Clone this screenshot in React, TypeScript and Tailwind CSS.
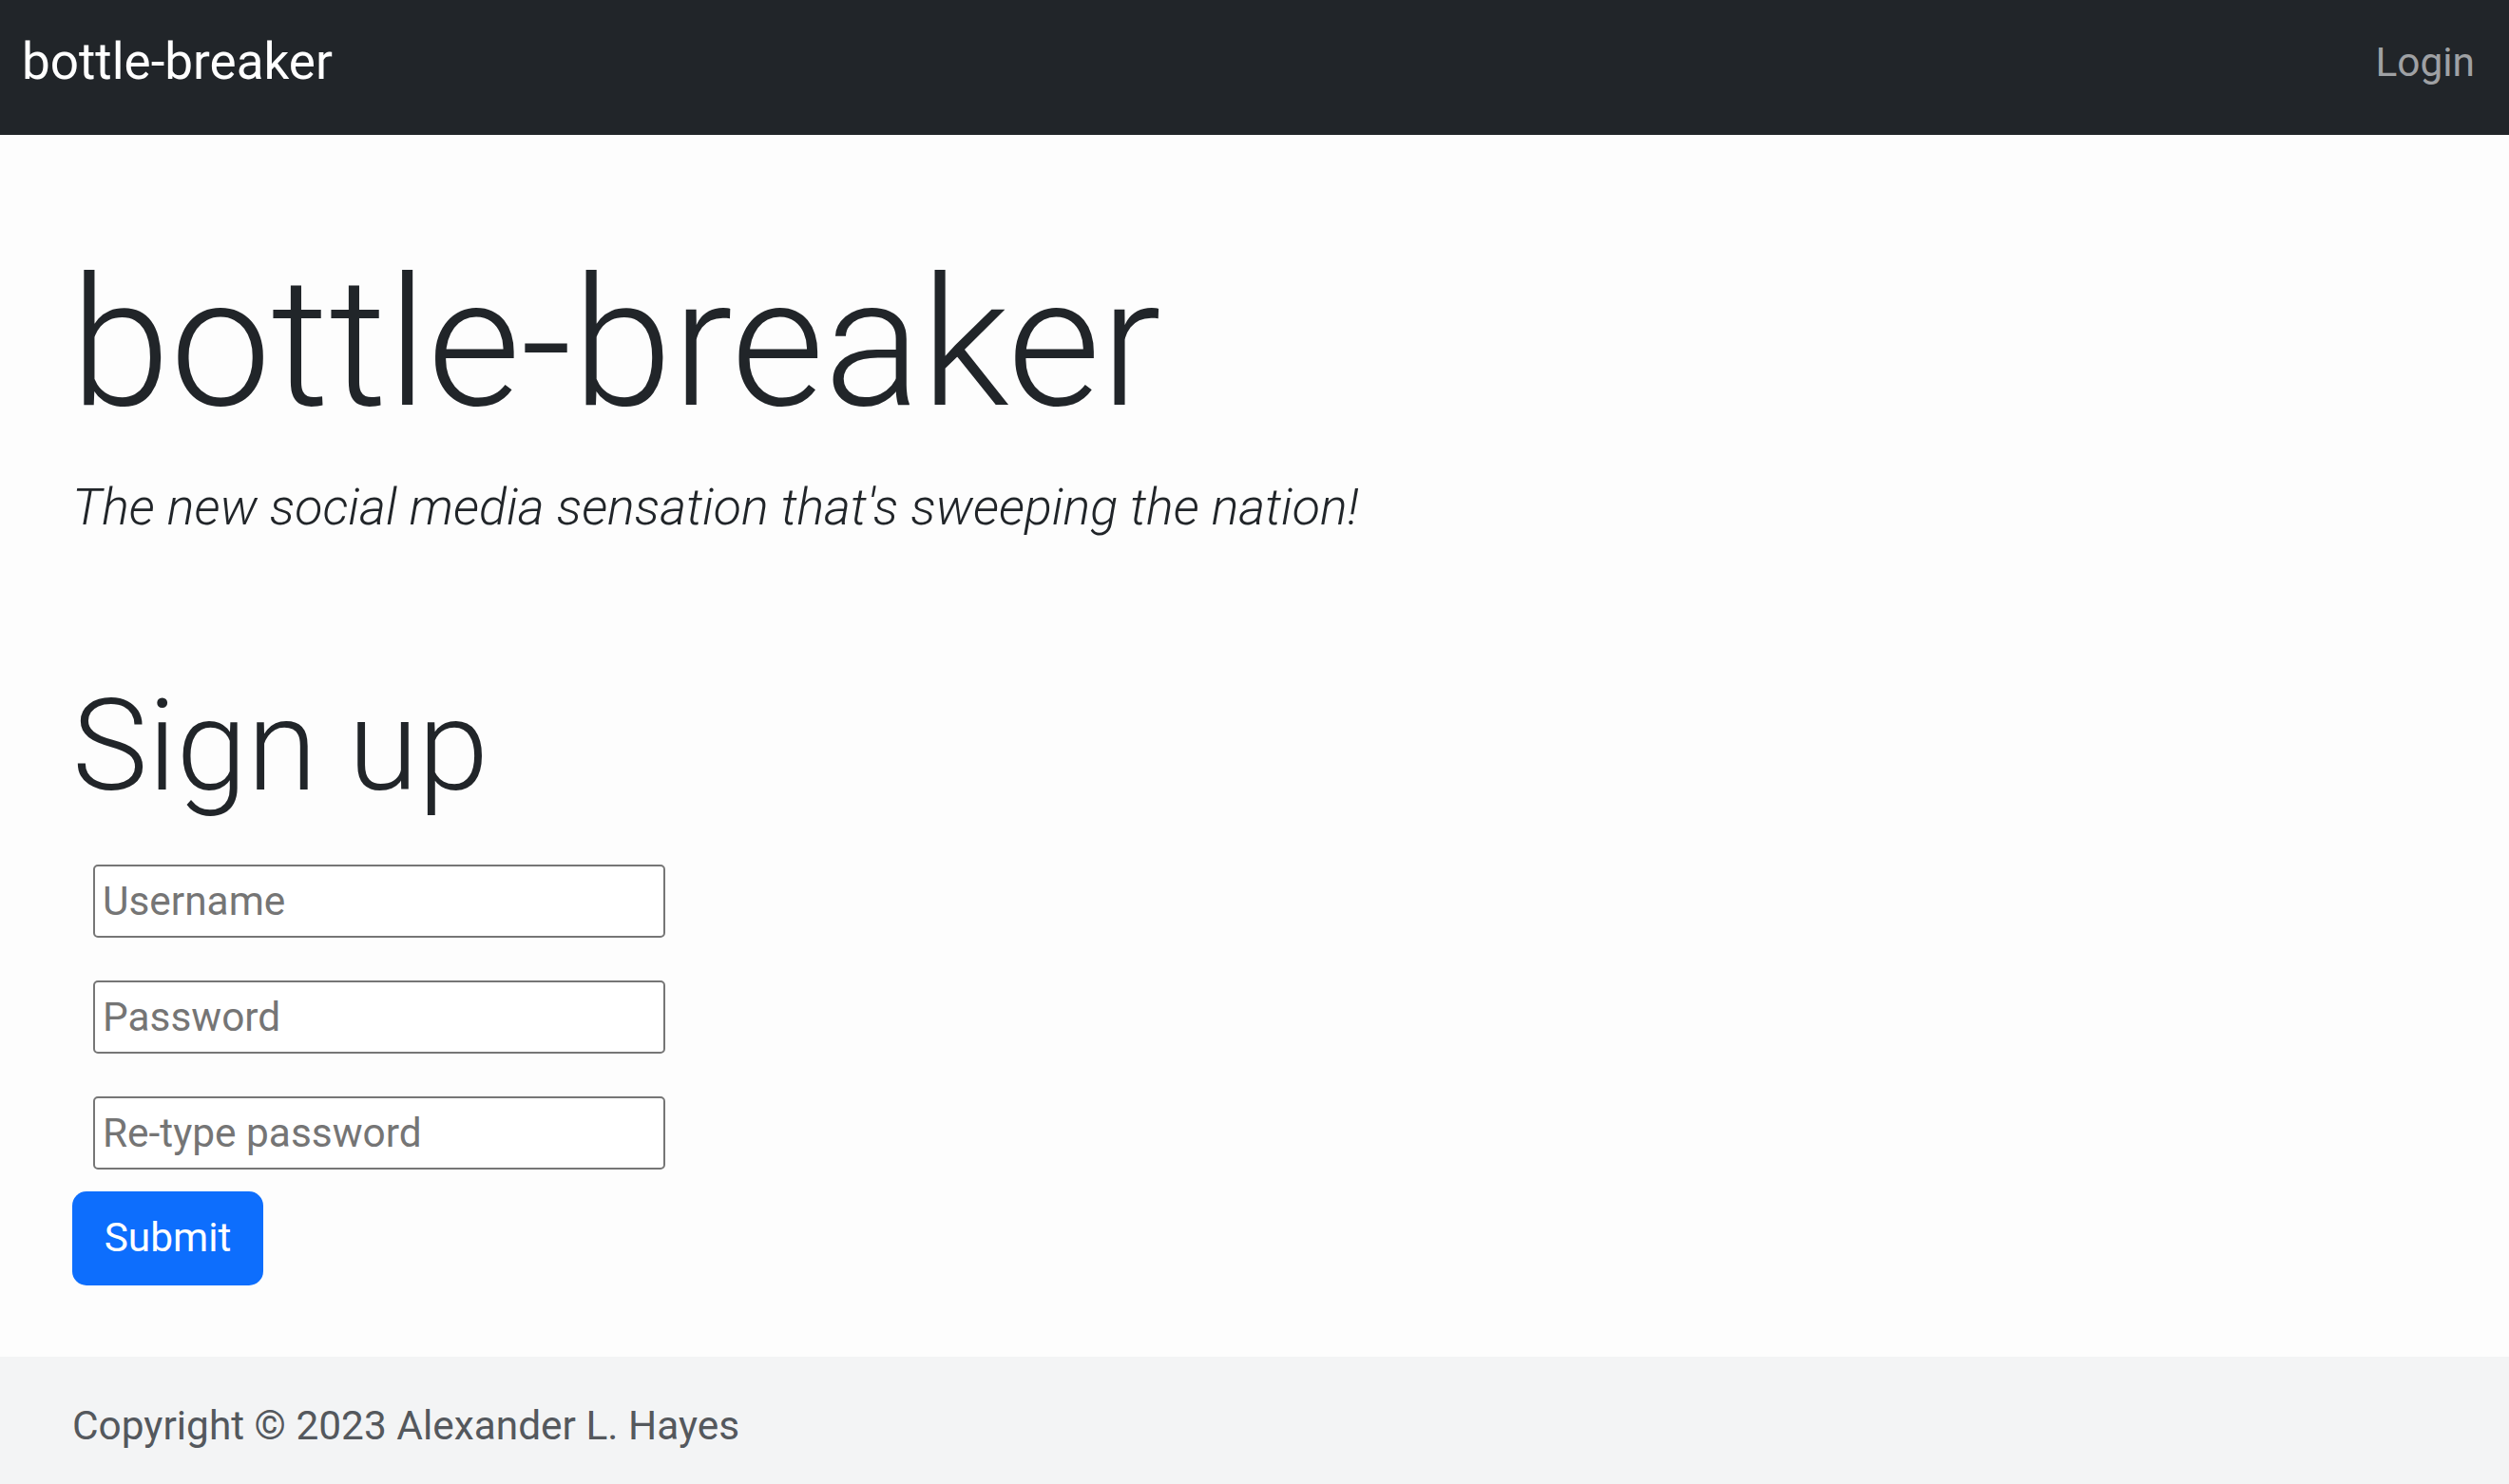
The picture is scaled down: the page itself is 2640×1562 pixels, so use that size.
export default function App() {
  return (
    <div className="min-h-screen flex flex-col bg-[#fdfdfd] font-[Roboto,sans-serif] text-[#212529]">
      {/* top bar */}
      <nav className="h-[142px] bg-[#212529] flex items-start justify-between pl-[23px] pr-[36px]">
        <a className="mt-[26px] text-[53px] leading-[1.5] text-white">bottle-breaker</a>
        <a className="mt-[34px] text-[42.4px] leading-[1.5] text-[#9fa1a4]">Login</a>
      </nav>

      <main className="flex-1 px-[76px] pt-[106px]">
        <h1 className="text-[189.5px] leading-[1.2] font-light -ml-[2px]">bottle-breaker</h1>
        <p className="mt-[19px] text-[53.8px] leading-[1.5] font-light italic">
          The new social media sensation that's sweeping the nation!
        </p>

        <h2 className="mt-[131px] text-[134px] leading-[1.2] font-light">Sign up</h2>

        <form className="mt-[43px] flex flex-col items-start">
          <div className="flex flex-col gap-[45px] pl-[22px]">
            <input
              type="text"
              placeholder="Username"
              className="w-[602px] h-[77px] px-[8px] border-2 border-[#767676] rounded-[5px] bg-white text-[42.4px] placeholder:text-[#757575] outline-none"
            />
            <input
              type="password"
              placeholder="Password"
              className="w-[602px] h-[77px] px-[8px] border-2 border-[#767676] rounded-[5px] bg-white text-[42.4px] placeholder:text-[#757575] outline-none"
            />
            <input
              type="password"
              placeholder="Re-type password"
              className="w-[602px] h-[77px] px-[8px] border-2 border-[#767676] rounded-[5px] bg-white text-[42.4px] placeholder:text-[#757575] outline-none"
            />
          </div>
          <button
            type="button"
            className="mt-[23px] w-[201px] h-[99px] rounded-[15px] bg-[#0d6efd] text-white text-[42.4px] leading-none"
          >
            Submit
          </button>
        </form>
      </main>

      <footer className="h-[134px] bg-[#f3f4f5] px-[76px] pt-[41px]">
        <p className="text-[42.4px] leading-[1.5] text-[#54585d]">Copyright © 2023 Alexander L. Hayes</p>
      </footer>
    </div>
  );
}
